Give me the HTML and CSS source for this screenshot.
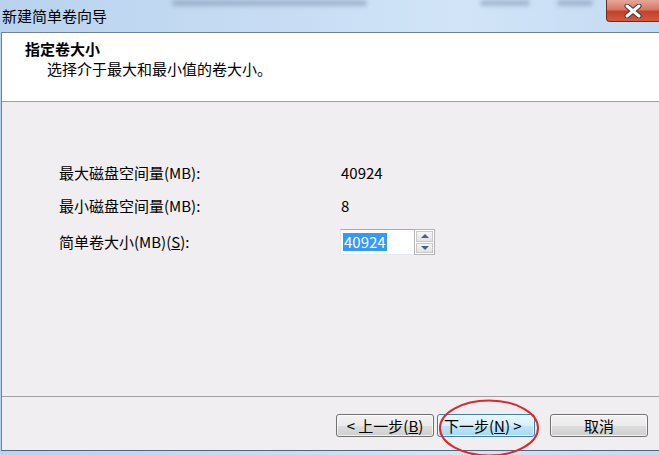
FILE: index.html
```html
<!DOCTYPE html>
<html lang="zh-CN">
<head>
    <meta charset="UTF-8">
    <title>新建简单卷向导</title>
    <link rel="stylesheet" href="styles.css">
</head>
<body>
    <div class="window">
        <div class="titlebar">
            <span class="title">新建简单卷向导</span>
            <span class="blur blur-long"></span>
            <span class="blur blur-mid"></span>
            <span class="blur blur-short"></span>
            <button class="close-button" aria-label="关闭">
                <svg width="22" height="14" viewBox="0 0 22 14">
                    <path d="M5 2 L17 12 M17 2 L5 12" stroke="#3a3a3a" stroke-width="5" stroke-linecap="round"/>
                    <path d="M5 2 L17 12 M17 2 L5 12" stroke="#ffffff" stroke-width="3" stroke-linecap="round"/>
                </svg>
            </button>
        </div>

        <div class="frame">
            <div class="wizard-header">
                <h1 class="wizard-title">指定卷大小</h1>
                <p class="wizard-subtitle">选择介于最大和最小值的卷大小。</p>
            </div>

            <div class="wizard-body">
                <div class="size-form">
                    <span class="label">最大磁盘空间量(MB):</span>
                    <span class="value">40924</span>
                    <span class="label">最小磁盘空间量(MB):</span>
                    <span class="value">8</span>
                    <span class="label">简单卷大小(MB)(<u>S</u>):</span>
                    <div class="spin">
                        <span class="spin-input"><span class="selected">40924</span></span>
                        <span class="spin-buttons">
                            <span class="spin-btn"><span class="arrow-up"></span></span>
                            <span class="spin-btn"><span class="arrow-down"></span></span>
                        </span>
                    </div>
                </div>
            </div>

            <div class="wizard-footer">
                <button class="btn">&lt; 上一步(<u>B</u>)</button>
                <button class="btn btn-default">下一步(<u>N</u>) &gt;</button>
                <button class="btn btn-cancel">取消</button>
                <svg class="highlight" width="104" height="60" viewBox="0 0 104 60">
                    <ellipse cx="52" cy="30" rx="49" ry="27.5" fill="none" stroke="#e2262a" stroke-width="2"/>
                </svg>
            </div>
        </div>
    </div>
</body>
</html>
```

FILE: styles.css
```css
* {
    margin: 0;
    padding: 0;
    box-sizing: border-box;
}

body {
    width: 659px;
    height: 455px;
    overflow: hidden;
    font-family: "Noto Sans CJK SC", "Noto Sans", sans-serif;
    font-size: 15px;
    color: #000;
    background-color: #bcd6f0;
}

.window {
    display: flex;
    flex-direction: column;
    height: 455px;
    background: linear-gradient(90deg, #b9d3ee 0%, #c8ddf4 45%, #d2e5f8 70%, #c3daf2 100%);
}

.titlebar {
    display: flex;
    align-items: flex-start;
    height: 32px;
    flex-shrink: 0;
}

.title {
    margin: 6px 0 0 2px;
    line-height: 20px;
    white-space: nowrap;
}

.blur {
    height: 6px;
    border-radius: 3px;
    background-color: rgba(70, 90, 120, 0.3);
    filter: blur(2px);
}

.blur-long {
    width: 195px;
    margin-left: 65px;
}

.blur-mid {
    width: 50px;
    margin-left: 113px;
}

.blur-short {
    width: 36px;
    margin-left: 27px;
}

.close-button {
    margin-left: auto;
    width: 53px;
    height: 22px;
    border: 1px solid #6d2a22;
    border-top: none;
    border-right: none;
    border-radius: 0 0 0 4px;
    background: linear-gradient(180deg, #e4a798 0%, #d87865 45%, #c6402a 55%, #d15a3f 100%);
    display: flex;
    align-items: center;
    justify-content: center;
}

.frame {
    flex: 1;
    display: flex;
    flex-direction: column;
    margin: 0 0 4px 1px;
    border-top: 1px solid #6f8299;
    border-left: 1px solid #6f8299;
    border-bottom: 1px solid #56667a;
    background-color: #f0eef0;
}

.wizard-header {
    height: 69px;
    flex-shrink: 0;
    background-color: #fff;
    border-bottom: 1px solid #a0a0a0;
    padding: 6px 0 0 23px;
}

.wizard-title {
    font-size: 15px;
    font-weight: bold;
    line-height: 20px;
}

.wizard-subtitle {
    margin-left: 22px;
    line-height: 20px;
}

.wizard-body {
    flex: 1;
    padding: 61px 0 0 57px;
}

.size-form {
    display: grid;
    grid-template-columns: 281px auto;
    grid-template-rows: 20px 20px 26px;
    row-gap: 13px;
    align-items: center;
}

.label,
.value {
    line-height: 20px;
    white-space: nowrap;
}

.value {
    padding-left: 1px;
}

.spin {
    display: flex;
    width: 95px;
    height: 26px;
}

.spin-input {
    flex: 1;
    display: flex;
    align-items: center;
    padding-left: 2px;
    background-color: #fff;
    border: 1px solid #e3e9ef;
    border-top-color: #abadb3;
    border-right: none;
}

.selected {
    background-color: #3399ff;
    color: #fff;
    line-height: 18px;
    padding: 0 1px;
}

.spin-buttons {
    display: flex;
    flex-direction: column;
    gap: 1px;
    width: 21px;
    padding: 1px;
    border: 1px solid #b5b5b5;
    background-color: #fff;
}

.spin-btn {
    flex: 1;
    display: flex;
    align-items: center;
    justify-content: center;
    border: 1px solid #c8c8c8;
    background: linear-gradient(180deg, #f6f6f6, #e2e2e2);
}

.arrow-up,
.arrow-down {
    width: 0;
    height: 0;
    border-left: 4px solid transparent;
    border-right: 4px solid transparent;
}

.arrow-up {
    border-bottom: 4px solid #4c5f82;
}

.arrow-down {
    border-top: 4px solid #4c5f82;
}

.wizard-footer {
    position: relative;
    height: 54px;
    flex-shrink: 0;
    display: flex;
    align-items: flex-start;
    justify-content: flex-end;
    padding: 17px 11px 0 0;
    border-top: 1px solid #a0a0a0;
}

.btn {
    width: 98px;
    height: 23px;
    font-family: inherit;
    font-size: 15px;
    line-height: 20px;
    color: #000;
    border: 1px solid #707070;
    border-radius: 3px;
    background: linear-gradient(180deg, #f2f2f2 0%, #ebebeb 50%, #dddddd 51%, #cfcfcf 100%);
    box-shadow: inset 0 0 0 1px rgba(255, 255, 255, 0.7);
}

.btn-default {
    margin-left: 3px;
    border-color: #3c7fb1;
    background: linear-gradient(180deg, #eaf6fd 0%, #d9f0fc 50%, #bee6fd 51%, #a7d9f5 100%);
    text-align: left;
    padding-left: 6px;
}

.btn-cancel {
    margin-left: 15px;
}

.btn u {
    text-underline-offset: 1px;
}

.highlight {
    position: absolute;
    left: 435px;
    top: 1px;
}
```
